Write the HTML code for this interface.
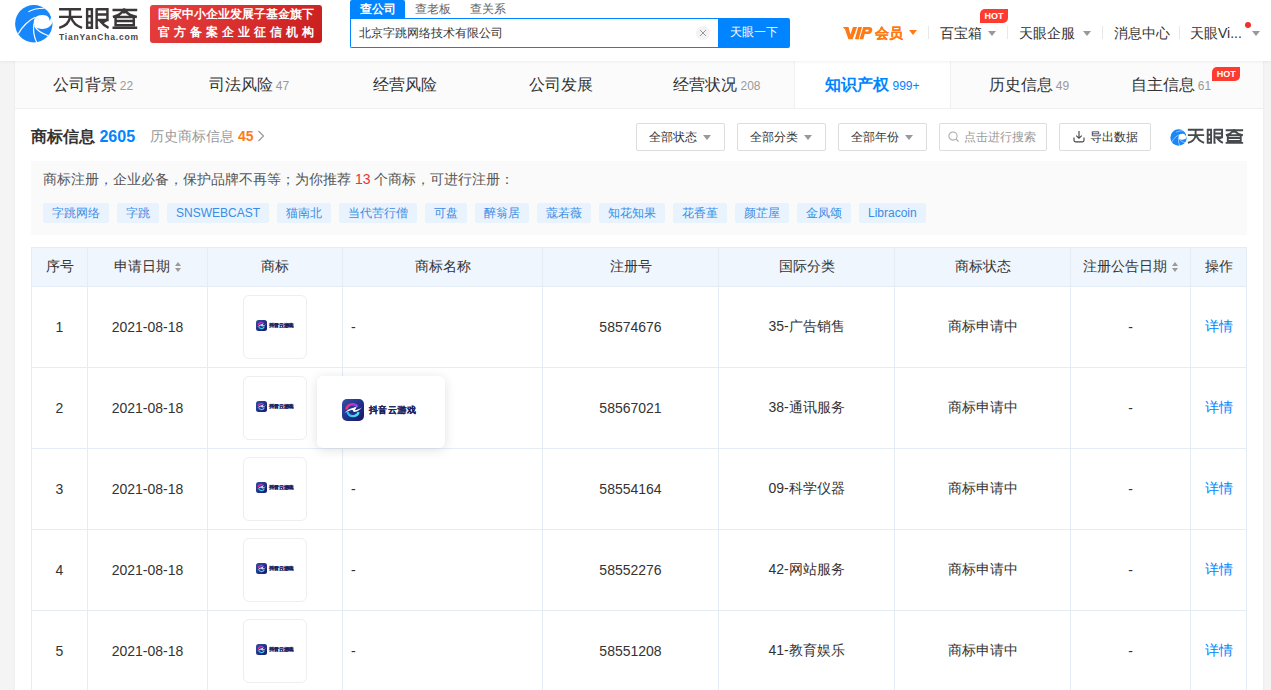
<!DOCTYPE html>
<html><head><meta charset="utf-8">
<style>
*{box-sizing:border-box;margin:0;padding:0}
html,body{width:1271px;height:690px;overflow:hidden}
body{background:#f4f4f4;font-family:"Liberation Sans",sans-serif;color:#333;position:relative}
.abs{position:absolute}
#hdr{position:absolute;left:0;top:0;width:1271px;height:61px;background:#fff;box-shadow:0 1px 3px rgba(0,0,0,.06);z-index:2}
.logo-txt{position:absolute;left:57px;top:4px;font-size:23px;font-weight:bold;color:#3d3d3d;letter-spacing:1px;white-space:nowrap}
.logo-sub{position:absolute;left:59px;top:32px;font-size:8.5px;line-height:10px;font-weight:bold;color:#4a4647;letter-spacing:0.82px;white-space:nowrap}
.badge{position:absolute;left:150px;top:5px;width:172px;height:38px;border-radius:3px;background:linear-gradient(135deg,#e84040,#c81d1d);color:#fff;font-size:12px;line-height:17px;padding-top:2px}
.badge div{white-space:nowrap;position:absolute;left:8px;font-weight:bold}
.stab{position:absolute;top:0;height:18px;font-size:12px;line-height:18px;white-space:nowrap}
.nav{position:absolute;top:24px;font-size:14px;line-height:18px;color:#333;white-space:nowrap}
.tri{position:absolute;width:0;height:0;border-left:4px solid transparent;border-right:4px solid transparent;border-top:5px solid #999}
.sep{position:absolute;top:26px;width:1px;height:13px;background:#e8e8e8}
.hot{position:absolute;background:#ff3b30;color:#fff;font-size:9px;font-weight:bold;line-height:14px;height:14px;width:28px;text-align:center;border-radius:5px 0 5px 0}
#panel{position:absolute;left:15px;top:61px;width:1248px;height:640px;background:#fff;box-shadow:0 0 2px rgba(0,0,0,.07)}
#tabs{position:absolute;left:0;top:0;width:1248px;height:48px;background:#fbfbfb;border-bottom:1px solid #efefef}
.tab{position:absolute;top:0;width:156px;height:47px;text-align:center;font-size:16px;line-height:47px;color:#333;white-space:nowrap}
.tab span{font-size:12px;color:#999;margin-left:3px}
.tab.act{background:#fff;color:#0084ff;font-weight:bold;border-left:1px solid #f0f0f0;border-right:1px solid #f0f0f0}
.tab.act span{color:#0084ff;font-weight:normal}
.fbtn{position:absolute;top:62px;height:28px;border:1px solid #ddd;border-radius:2px;font-size:12px;line-height:26px;color:#333;white-space:nowrap}
.tag{display:inline-block;height:20px;line-height:20px;padding:0 9px;margin-right:8px;background:#e8f3fd;color:#3b8de4;font-size:12px;border-radius:2px;vertical-align:top}
table{position:absolute;left:16px;top:186px;border-collapse:collapse;table-layout:fixed}
td,th{border:1px solid #e4edf6;font-size:14px;font-weight:normal;text-align:center;color:#333}
th{height:39px;background:#eff6fd}
td{height:81px}
.tm{display:inline-block;width:64px;height:64px;border:1px solid #eee;border-radius:6px;vertical-align:middle;position:relative}
.dy{position:absolute;left:0;top:0;width:128px;height:22px;white-space:nowrap;font-style:normal}
.dy svg{position:absolute;left:0;top:0}
.dy b{position:absolute;left:26.5px;top:5px;font-size:9.4px;line-height:12px;font-weight:900;color:#1b1d5e;letter-spacing:0.55px;text-shadow:0.4px 0 0 #1b1d5e}
.tm .dy{left:11.6px;top:24.4px;transform:scale(.5);transform-origin:0 0}
.tm .dy b{text-shadow:0.8px 0 0 #1b1d5e,0 0.6px 0 #1b1d5e}
.sort{display:inline-block;width:6px;height:10px;position:relative;vertical-align:middle;margin-left:5px;top:0px}
.sort:before{content:"";position:absolute;left:0;top:-0.5px;border-left:3.1px solid transparent;border-right:3.1px solid transparent;border-bottom:4.4px solid #9a9a9a}
.sort:after{content:"";position:absolute;left:0;top:6px;border-left:3.1px solid transparent;border-right:3.1px solid transparent;border-top:4.4px solid #9a9a9a}
a{color:#0084ff;text-decoration:none}
</style></head><body>
<svg width="0" height="0" style="position:absolute"><defs><g id="tyc">
<circle cx="21.8" cy="21.8" r="18.7" fill="#1787fb"/>
<path d="M32.1 6.2 C35.5 7.5 38.6 10.5 38.9 14.2 C39.1 16 38.6 17.5 37.5 18.5 L40.7 19.8 L45 19 L45 -1 L30 -1 Z" fill="#fff"/>
<path d="M23.4 15.3 C25.5 13.9 27.5 13.2 30 13.1 C33 13 35.3 13.8 36.5 15.3 C37.2 16.3 37.5 17.3 37.5 18.5 L40.7 19.8 C39.6 22.6 38.4 24.2 36.6 25.3 C34.5 26.6 32 27 29.8 26.9 C27.8 26.9 26.2 26.6 25.1 26.1 C23.9 25.4 23 24.7 22.6 23.9 C22 22.9 21.7 22 21.7 21.1 C21.7 19 22.3 16.9 23.4 15.3 Z" fill="#fff"/>
<path d="M23.4 15.3 C18 17.5 10 24 6.4 31.8" fill="none" stroke="#fff" stroke-width="1.2"/>
<path d="M22 21.5 C21 27 21.6 34 24.8 40.8" fill="none" stroke="#fff" stroke-width="1.2"/>
<path d="M22.6 23.8 C24 27.5 27.5 30.5 36.4 33.8" fill="none" stroke="#fff" stroke-width="1.2"/>
<path d="M16.4 9.7 C20.5 7.5 26 6.3 32.2 6.3" fill="none" stroke="#fff" stroke-width="1.1"/>
</g><linearGradient id="dyg" x1="0" y1="0" x2="1" y2="1"><stop offset="0" stop-color="#3150a8"/><stop offset="1" stop-color="#15166a"/></linearGradient>
<linearGradient id="dyp" x1="0" y1="0" x2="1" y2="0"><stop offset="0" stop-color="#ff2f7a"/><stop offset="1" stop-color="#8a3cff"/></linearGradient>
<linearGradient id="dyc" x1="0" y1="0" x2="1" y2="0"><stop offset="0" stop-color="#2fb4f5"/><stop offset="1" stop-color="#47f0ee"/></linearGradient>
<g id="dyi"><rect x="0" y="0" width="22" height="22" rx="5" fill="url(#dyg)"/>
<path d="M4.4 10.4 A6.4 6.4 0 0 1 15.8 7.8" fill="none" stroke="url(#dyp)" stroke-width="2.4"/>
<path d="M5.4 13 A5.9 5.9 0 0 0 16.6 13.2" fill="none" stroke="url(#dyc)" stroke-width="2.4"/>
<path d="M2.6 13.8 C5 11.5 7.5 9.6 10.5 8.9 C12 8.6 13.5 8.2 14.6 7.2 C14.3 8.8 13.6 10.2 12.6 11.2 C15 10.9 17.8 9.8 20 8.4 C18 10.6 15.5 12.4 12.2 13 C11.5 13.1 11.3 12.2 11 11.6 C10.5 11 9.5 11 8.5 11.3 C6.5 12 4.5 12.9 2.6 13.8 Z" fill="#fff"/>
</g>
<g id="tyct" fill="none">
<path d="M60 78 H385 M60 190 H400 M222 62 V190 M222 195 Q205 310 62 352 M240 200 Q270 310 400 352"/>
<path d="M475 77 H545 V350 H475 Z M475 182 H545 M475 275 H545"/>
<path d="M615 62 V365 M615 77 H775 V235 H615 M615 155 H775 M600 350 H640 M775 232 L705 272 M665 248 Q720 320 792 352"/>
<path d="M850 88 H1215 M1022 62 V140 M1005 105 Q950 170 855 192 M1040 105 Q1095 170 1210 192 M895 192 H1165 V312 H895 Z M895 252 H1165 M850 352 H1215"/>
</g></defs></svg>
<div id="hdr">
  <!-- logo -->
  <svg class="abs" style="left:12px;top:2px" width="44" height="44" viewBox="0 0 44 44"><use href="#tyc"/></svg>
  <svg class="abs" style="left:55px;top:4px" width="86" height="26" viewBox="0 0 1271 384"><use href="#tyct" stroke-width="36" stroke="#3b3738"/></svg>
  <div class="logo-sub">TianYanCha.com</div>
  <div class="badge"><div style="top:1px">国家中小企业发展子基金旗下</div><div style="top:19px;letter-spacing:4px">官方备案企业征信机构</div></div>
  <!-- search -->
  <div class="stab" style="left:350px;width:55px;background:#0084ff;color:#fff;border-radius:2px 2px 0 0;text-align:center;font-weight:bold">查公司</div>
  <div class="stab" style="left:415px;color:#666">查老板</div>
  <div class="stab" style="left:470px;color:#666">查关系</div>
  <div class="abs" style="left:350px;top:18px;width:369px;height:30px;border:1px solid #0084ff;border-right:none;border-radius:0 0 0 2px"></div>
  <div class="abs" style="left:359px;top:25px;font-size:12px;line-height:16px;color:#333;white-space:nowrap">北京字跳网络技术有限公司</div>
  <svg class="abs" style="left:696px;top:26px" width="14" height="14" viewBox="0 0 14 14"><circle cx="7" cy="7" r="7" fill="#f3f3f3"/><path d="M4 4 L10 10 M10 4 L4 10" stroke="#999" stroke-width="1"/></svg>
  <div class="abs" style="left:718px;top:18px;width:72px;height:30px;background:#0084ff;border-radius:0 2px 2px 0;color:#fff;font-size:12px;font-weight:500;line-height:29px;text-align:center">天眼一下</div>
  <!-- nav -->
  <svg class="abs" style="left:843px;top:26.8px" width="30" height="13" viewBox="0 0 30 13"><g fill="#ff7a15">
<path d="M1.2 0 L5.5 0 L7.5 7.6 L9.9 0 L14.1 0 L9.6 12.3 L5.4 12.3 Z"/><path d="M-0.2 0 L3.4 0 L2.8 3 Z"/>
<path d="M15.2 0 L19 0 L15.7 12.3 L11.9 12.3 Z"/>
<path d="M20.2 0 L26 0 C28.6 0 29.7 1.6 29.2 3.7 C28.7 5.9 27 7.1 24.4 7.1 L21.6 7.1 L22.3 4.4 L24.4 4.4 C25.2 4.4 25.6 4 25.7 3.5 C25.8 3 25.5 2.7 24.9 2.7 L22.8 2.7 L20.3 12.3 L16.5 12.3 Z"/>
</g></svg>
  <div class="nav" style="left:874.5px;top:23.5px;color:#ff7a15;font-weight:900;font-size:14px;text-shadow:0.4px 0 0 #ff7a15">会员</div>
  <div class="tri" style="left:908.5px;top:30px;border-top-color:#ff7a15;border-left-width:4.2px;border-right-width:4.2px"></div>
  <div class="sep" style="left:928px"></div>
  <div class="nav" style="left:940px">百宝箱</div>
  <div class="tri" style="left:988px;top:31px"></div>
  <div class="hot" style="left:980px;top:9px">HOT</div>
  <div class="sep" style="left:1007px"></div>
  <div class="nav" style="left:1019px">天眼企服</div>
  <div class="tri" style="left:1083px;top:31px"></div>
  <div class="sep" style="left:1102px"></div>
  <div class="nav" style="left:1114px">消息中心</div>
  <div class="sep" style="left:1179px"></div>
  <div class="nav" style="left:1190px">天眼Vi...</div>
  <div class="abs" style="left:1245px;top:22px;width:6px;height:6px;border-radius:3px;background:#f0302a"></div>
  <div class="tri" style="left:1252px;top:31px"></div>
</div>

<div id="panel">
  <div id="tabs">
    <div class="tab" style="left:0">公司背景<span>22</span></div>
    <div class="tab" style="left:156px">司法风险<span>47</span></div>
    <div class="tab" style="left:312px">经营风险</div>
    <div class="tab" style="left:468px">公司发展</div>
    <div class="tab" style="left:624px">经营状况<span>208</span></div>
    <div class="tab act" style="left:779px;width:157px">知识产权<span>999+</span></div>
    <div class="tab" style="left:936px">历史信息<span>49</span></div>
    <div class="tab" style="left:1092px">自主信息<span>61</span><b class="hot" style="position:relative;display:inline-block;top:-13px;left:1px;vertical-align:baseline">HOT</b></div>
  </div>
  <!-- title -->
  <div class="abs" style="left:16px;top:65px;font-size:16px;line-height:22px;font-weight:bold;color:#333;white-space:nowrap">商标信息 <span style="color:#0084ff">2605</span></div>
  <div class="abs" style="left:135px;top:65px;font-size:14px;line-height:20px;color:#999;white-space:nowrap">历史商标信息 <span style="color:#ff7a15;font-weight:bold">45</span></div>
  <svg class="abs" style="left:241.5px;top:68.5px" width="8" height="12" viewBox="0 0 8 12"><path d="M1.5 1 L6.5 6 L1.5 11" fill="none" stroke="#999" stroke-width="1.2"/></svg>
  <!-- filters -->
  <div class="fbtn" style="left:621px;width:89px;padding-left:12px">全部状态<i class="tri" style="left:66px;top:11px"></i></div>
  <div class="fbtn" style="left:722px;width:89px;padding-left:12px">全部分类<i class="tri" style="left:66px;top:11px"></i></div>
  <div class="fbtn" style="left:823px;width:89px;padding-left:12px">全部年份<i class="tri" style="left:66px;top:11px"></i></div>
  <div class="fbtn" style="left:924px;width:108px;padding-left:24px;color:#999">点击进行搜索
    <svg class="abs" style="left:8px;top:7px" width="12" height="12" viewBox="0 0 12 12"><circle cx="5" cy="5" r="4.1" fill="none" stroke="#aaa" stroke-width="1.05"/><path d="M8 8 L10.6 10.6" stroke="#aaa" stroke-width="1.2"/></svg></div>
  <div class="fbtn" style="left:1044px;width:92px;padding-left:30px">导出数据
    <svg class="abs" style="left:13px;top:7px" width="12" height="12" viewBox="0 0 12 12"><path d="M6 0 V7.3 M3.2 4.6 L6 7.3 L8.8 4.6 M1 6.4 V9.3 Q1 10.8 2.5 10.8 H9.5 Q11 10.8 11 9.3 V6.4" fill="none" stroke="#444" stroke-width="1.15"/></svg></div>
  <svg class="abs" style="left:1153.8px;top:66.6px" width="19.3" height="19.3" viewBox="0 0 44 44"><use href="#tyc"/></svg>
  <svg class="abs" style="left:1170.2px;top:65.4px" width="60.8" height="18.4" viewBox="0 0 1271 384"><use href="#tyct" stroke-width="40" stroke="#46494e"/></svg>
  <!-- recommend -->
  <div class="abs" style="left:16px;top:100px;width:1216px;height:74px;background:#fafafa">
    <div class="abs" style="left:12px;top:9px;font-size:14px;line-height:18px;color:#555;white-space:nowrap">商标注册，企业必备，保护品牌不再等；为你推荐 <span style="color:#e63535">13</span> 个商标，可进行注册：</div>
    <div class="abs" style="left:12px;top:42px;white-space:nowrap;font-size:0"><span class="tag">字跳网络</span><span class="tag">字跳</span><span class="tag">SNSWEBCAST</span><span class="tag">猫南北</span><span class="tag">当代苦行僧</span><span class="tag">可盘</span><span class="tag">醉翁居</span><span class="tag">蔻若薇</span><span class="tag">知花知果</span><span class="tag">花香堇</span><span class="tag">颜芷屋</span><span class="tag">金凤颂</span><span class="tag">Libracoin</span></div>
  </div>
  <!-- table -->
  <table>
    <colgroup><col style="width:56px"><col style="width:120px"><col style="width:135px"><col style="width:200px"><col style="width:176px"><col style="width:176px"><col style="width:176px"><col style="width:120px"><col style="width:56px"></colgroup>
    <tr><th>序号</th><th>申请日期<i class="sort"></i></th><th>商标</th><th>商标名称</th><th>注册号</th><th>国际分类</th><th>商标状态</th><th>注册公告日期<i class="sort"></i></th><th>操作</th></tr>
    <tr><td>1</td><td>2021-08-18</td><td><span class="tm"><i class="dy"><svg width="22" height="22"><use href="#dyi"/></svg><b>抖音云游戏</b></i></span></td><td style="text-align:left;padding-left:8px">-</td><td>58574676</td><td>35-广告销售</td><td>商标申请中</td><td>-</td><td><a>详情</a></td></tr>
    <tr><td>2</td><td>2021-08-18</td><td><span class="tm"><i class="dy"><svg width="22" height="22"><use href="#dyi"/></svg><b>抖音云游戏</b></i></span></td><td style="text-align:left;padding-left:8px">-</td><td>58567021</td><td>38-通讯服务</td><td>商标申请中</td><td>-</td><td><a>详情</a></td></tr>
    <tr><td>3</td><td>2021-08-18</td><td><span class="tm"><i class="dy"><svg width="22" height="22"><use href="#dyi"/></svg><b>抖音云游戏</b></i></span></td><td style="text-align:left;padding-left:8px">-</td><td>58554164</td><td>09-科学仪器</td><td>商标申请中</td><td>-</td><td><a>详情</a></td></tr>
    <tr><td>4</td><td>2021-08-18</td><td><span class="tm"><i class="dy"><svg width="22" height="22"><use href="#dyi"/></svg><b>抖音云游戏</b></i></span></td><td style="text-align:left;padding-left:8px">-</td><td>58552276</td><td>42-网站服务</td><td>商标申请中</td><td>-</td><td><a>详情</a></td></tr>
    <tr><td>5</td><td>2021-08-18</td><td><span class="tm"><i class="dy"><svg width="22" height="22"><use href="#dyi"/></svg><b>抖音云游戏</b></i></span></td><td style="text-align:left;padding-left:8px">-</td><td>58551208</td><td>41-教育娱乐</td><td>商标申请中</td><td>-</td><td><a>详情</a></td></tr>
  </table>
  <!-- popover -->
  <div class="abs" style="left:302px;top:315px;width:128px;height:72px;background:#fff;border-radius:6px;box-shadow:0 2px 12px rgba(0,0,0,.12)"><i class="dy" style="left:25px;top:23px"><svg width="22" height="22"><use href="#dyi"/></svg><b>抖音云游戏</b></i></div>
</div>
</body></html>
